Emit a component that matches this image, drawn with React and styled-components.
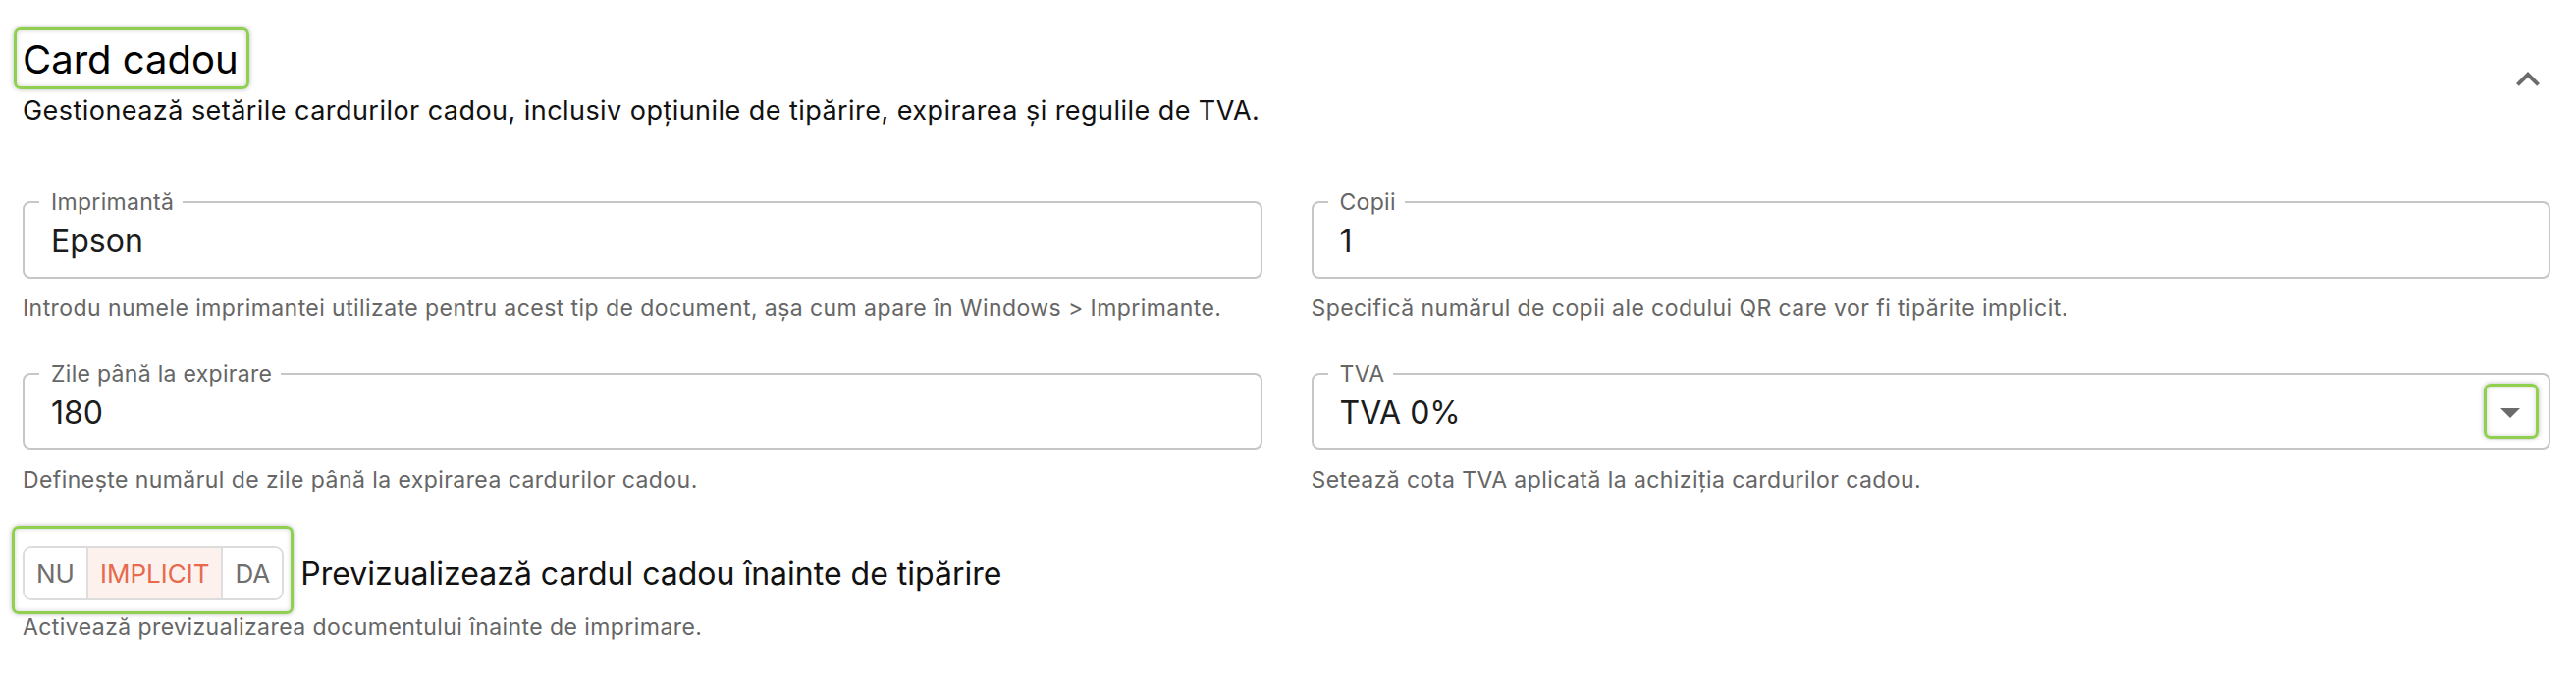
import React from 'react'
import styled, { createGlobalStyle } from 'styled-components'

const GlobalStyle = createGlobalStyle`
  html, body {
    margin: 0;
    padding: 0;
    background: #ffffff;
  }
  body {
    font-family: 'Inter', 'Noto Sans', sans-serif;
    color: #111111;
  }
`

const Page = styled.div`
  display: flex;
  flex-direction: column;
  padding: 37px 26px 0 23px;
`

const Header = styled.div`
  display: flex;
  align-items: center;
  justify-content: space-between;
`

const HeaderText = styled.div`
  display: flex;
  flex-direction: column;
  align-items: flex-start;
`

// green annotation frame, pulled out with negative margins so the layout stays put
const Highlight = styled.div`
  display: inline-flex;
  border: 3px solid #8fd14f;
  border-radius: 7px;
  box-shadow: 0 0 5px rgba(0, 0, 0, 0.28), inset 0 0 5px rgba(0, 0, 0, 0.18);
  margin: ${p => p.$m};
  padding: ${p => p.$p};
`

const Title = styled.h1`
  margin: 0;
  font-size: 40px;
  line-height: 48px;
  font-weight: 400;
  color: #000000;
`

const Subtitle = styled.p`
  margin: 8px 0 0;
  font-size: 27px;
  line-height: 39px;
  letter-spacing: 0.45px;
  color: #111111;
`

const IconButton = styled.button`
  display: flex;
  align-items: center;
  justify-content: center;
  width: 48px;
  height: 48px;
  padding: 0;
  margin: 0 -1px 7px 0;
  border: none;
  background: transparent;
  color: #6b6b6b;
`

const FieldGrid = styled.div`
  display: grid;
  grid-template-columns: 1fr 1fr;
  column-gap: 50px;
  row-gap: 41px;
  margin-top: 63px;
`

const FieldWrap = styled.div`
  display: flex;
  flex-direction: column;
  min-width: 0;
`

const Outline = styled.fieldset`
  margin: 0;
  padding: 0 27px;
  min-width: 0;
  border: 2px solid #c6c6c6;
  border-radius: 8px;
`

const Legend = styled.legend`
  margin-left: -12px;
  padding: 0 9px 0 12px;
  font-size: 23px;
  line-height: 22px;
  letter-spacing: 0.3px;
  color: #666666;
`

const FieldBody = styled.div`
  display: flex;
  align-items: center;
  justify-content: space-between;
  height: 56px;
  padding-bottom: 9px;
`

const Value = styled.span`
  font-size: 32px;
  color: #1c1c1c;
`

const Helper = styled.p`
  margin: ${p => p.$mt || '15px'} 0 0;
  font-size: 23px;
  line-height: 30px;
  letter-spacing: 0.43px;
  color: #666666;
`

const ToggleRow = styled.div`
  display: flex;
  align-items: center;
  gap: 17px;
  margin-top: 53px;
`

const ToggleGroup = styled.div`
  display: flex;
  height: 55px;
  box-sizing: border-box;
  border: 2px solid #dcdcdc;
  border-radius: 9px;
  overflow: hidden;
`

const Segment = styled.div`
  display: flex;
  align-items: center;
  padding: 0 12px;
  font-size: 26px;
  color: ${p => (p.$active ? '#e8694b' : '#6f6f6f')};
  background: ${p => (p.$active ? '#fdf1ee' : '#ffffff')};
  & + & {
    border-left: 2px solid #dedede;
  }
`

const ToggleLabel = styled.span`
  font-size: 32px;
  color: #111111;
`

const ChevronUp = () => (
  <svg width="48" height="48" viewBox="0 0 24 24" fill="currentColor">
    <path d="M12 8l-6 6 1.41 1.41L12 10.83l4.59 4.58L18 14z" />
  </svg>
)

const ArrowDropDown = () => (
  <svg width="48" height="48" viewBox="0 0 24 24" fill="#6b6b6b">
    <path d="M7 10l5 5 5-5z" />
  </svg>
)

function Field ({ label, value, helper, select }) {
  return (
    <FieldWrap>
      <Outline>
        <Legend>{label}</Legend>
        <FieldBody>
          <Value>{value}</Value>
          {select && (
            <Highlight $m="-5px -17px -3px -3px" $p="2px 2px 0 0">
              <ArrowDropDown />
            </Highlight>
          )}
        </FieldBody>
      </Outline>
      <Helper>{helper}</Helper>
    </FieldWrap>
  )
}

export default function App () {
  return (
    <>
      <GlobalStyle />
      <Page>
        <Header>
          <HeaderText>
            <Highlight $m="-9px 0 -6px -9px" $p="6px 8px 3px 6px">
              <Title>Card cadou</Title>
            </Highlight>
            <Subtitle>
              Gestionează setările cardurilor cadou, inclusiv opțiunile de tipărire, expirarea și regulile de TVA.
            </Subtitle>
          </HeaderText>
          <IconButton aria-label="Restrânge">
            <ChevronUp />
          </IconButton>
        </Header>

        <FieldGrid>
          <Field
            label="Imprimantă"
            value="Epson"
            helper="Introdu numele imprimantei utilizate pentru acest tip de document, așa cum apare în Windows > Imprimante."
          />
          <Field
            label="Copii"
            value="1"
            helper="Specifică numărul de copii ale codului QR care vor fi tipărite implicit."
          />
          <Field
            label="Zile până la expirare"
            value="180"
            helper="Definește numărul de zile până la expirarea cardurilor cadou."
          />
          <Field
            label="TVA"
            value="TVA 0%"
            select
            helper="Setează cota TVA aplicată la achiziția cardurilor cadou."
          />
        </FieldGrid>

        <ToggleRow>
          <Highlight $m="-21px -10px -14px -11px" $p="18px 7px 11px 8px">
            <ToggleGroup>
              <Segment>NU</Segment>
              <Segment $active>IMPLICIT</Segment>
              <Segment>DA</Segment>
            </ToggleGroup>
          </Highlight>
          <ToggleLabel>Previzualizează cardul cadou înainte de tipărire</ToggleLabel>
        </ToggleRow>
        <Helper $mt="12px">Activează previzualizarea documentului înainte de imprimare.</Helper>
      </Page>
    </>
  )
}
